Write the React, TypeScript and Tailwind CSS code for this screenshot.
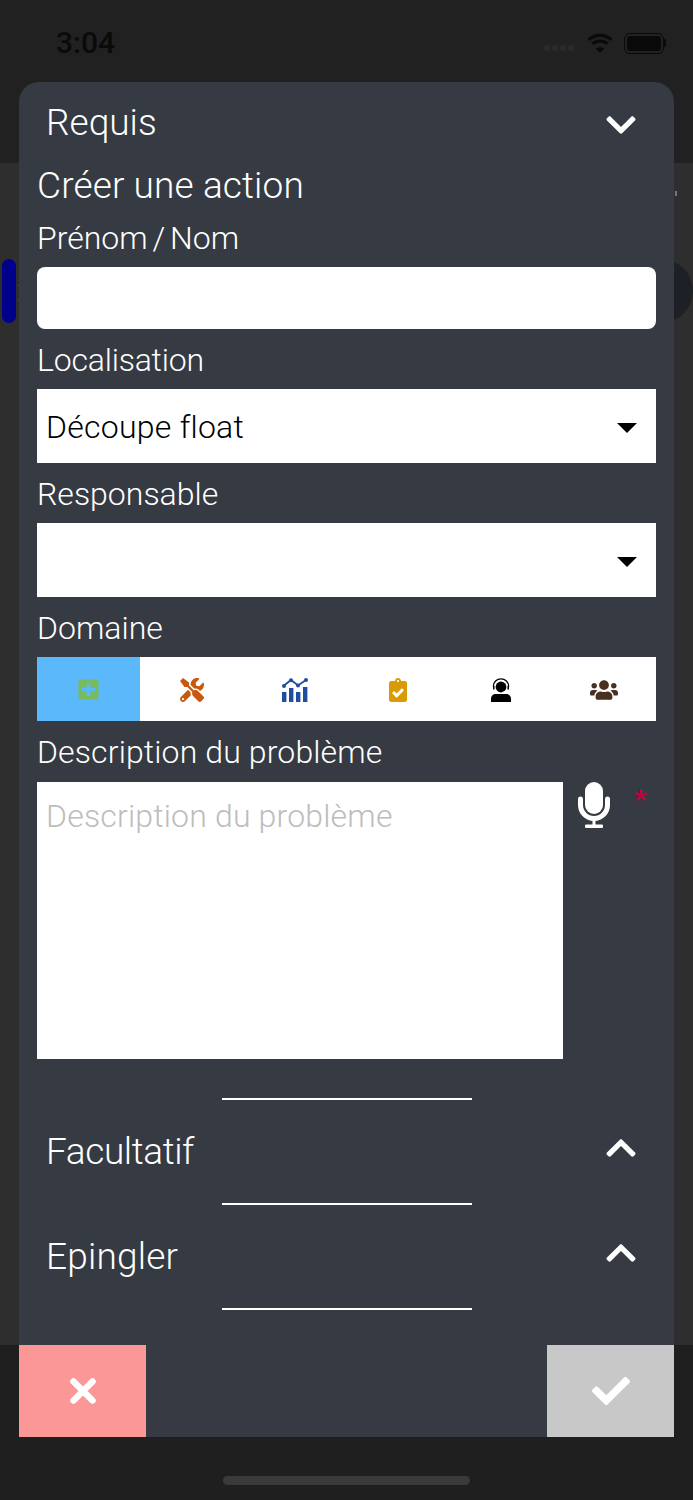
import { FaChevronDown, FaChevronUp, FaPlusSquare, FaTools, FaClipboardCheck, FaUsers, FaCheck } from "react-icons/fa";

const font = { fontFamily: "Roboto, 'Liberation Sans', sans-serif" };

function Label({ children, extra }: { children: string; extra?: string }) {
  return <div className={"mt-3 mb-[10px] flex h-[38px] items-center pl-[18px] text-[32px] font-light text-white " + (extra ?? "")}>{children}</div>;
}

function Select({ value }: { value?: string }) {
  return (
    <div className="mx-[18px] flex h-[74px] items-center justify-between bg-white pl-[9px] pr-[19px] text-[32px] font-[350] tracking-[0.25px] text-black">
      <span className="pt-[1px]">{value}</span>
      <span className="mt-[4px] h-0 w-0 border-x-[10px] border-t-[10px] border-x-transparent border-t-black" />
    </div>
  );
}

function Chart() {
  return (
    <svg width="26" height="24" viewBox="0 0 26 24" fill="#1f4ea1">
      <rect x="0" y="14" width="4.400" height="10" />
      <rect x="7" y="10" width="4.400" height="14" />
      <rect x="14" y="14" width="4.400" height="10" />
      <rect x="21" y="9" width="4.400" height="15" />
      <path d="M2 7.500 9 2l7 5.500L24 2" fill="none" stroke="#1f4ea1" strokeWidth="1.800" />
      <circle cx="2" cy="8" r="2" /><circle cx="9" cy="2.200" r="2" /><circle cx="16" cy="7.500" r="2" /><circle cx="24" cy="2" r="2" />
    </svg>
  );
}

function Agent() {
  return (
    <svg width="20" height="24" viewBox="0 0 20 24">
      <path d="M2.300 11.500a7.700 7.700 0 1 1 15.400 0" fill="none" stroke="#000" strokeWidth="1.300" transform="translate(0 -3)" />
      <path d="M2.800 8v3.600M17.200 8v3.600" stroke="#000" strokeWidth="1.500" />
      <circle cx="10" cy="9" r="5.400" fill="#000" />
      <path d="M15.500 11.500c-.6 2-2.300 2.800-4.300 2.800" fill="none" stroke="#fff" strokeWidth="1" />
      <path d="M0 24v-3.300C0 18 2.200 16 4.800 16h10.400c2.600 0 4.800 2 4.800 4.700V24z" fill="#000" />
    </svg>
  );
}

function Mic() {
  return (
    <svg width="32" height="46" viewBox="0 0 32 46" fill="#fff" className="ml-[15px]">
      <rect x="7" y="0" width="18" height="32" rx="9" />
      <path d="M2.500 17v6a13.500 13.500 0 0 0 27 0v-6" fill="none" stroke="#fff" strokeWidth="5" strokeLinecap="round" />
      <rect x="14.500" y="36" width="3" height="8" />
      <rect x="7" y="42.500" width="18" height="3.500" rx="1" />
    </svg>
  );
}

function Tab({ children, active }: { children: React.ReactNode; active?: boolean }) {
  return <div className={active ? "flex flex-1 items-center justify-center bg-[#5bb8fa] pt-[1px]" : "flex flex-1 items-center justify-center pt-[1px]"}>{children}</div>;
}

function Section({ title, extra }: { title: string; extra: string }) {
  return (
    <>
      <div className={"flex h-[103px] items-center justify-between pl-[27px] pr-[36px] text-[37px] font-light text-white " + extra}>
        <span>{title}</span>
        <FaChevronUp className="mb-[8px] text-[34px]" />
      </div>
      <div className="mx-auto h-[2px] w-[250px] bg-white" />
    </>
  );
}

export default function App() {
  return (
    <div style={font} className="relative flex h-[1500px] w-[693px] flex-col overflow-hidden bg-[#1f1f1f]">
      <div className="h-[163px] bg-[#212121] pl-[56px] pt-[25px]">
        <div className="flex items-center justify-between">
          <span className="text-[30px] font-medium leading-[36px] text-[#0a0a0a]">3:04</span>
          <div className="mr-[27px] flex items-center">
            <div className="mr-[2px] mt-[10px] flex gap-[2px]">
              <span className="h-[6px] w-[6px] rounded-full bg-[#2b2b2b]" />
              <span className="h-[6px] w-[6px] rounded-full bg-[#2b2b2b]" />
              <span className="h-[6px] w-[6px] rounded-full bg-[#2b2b2b]" />
              <span className="h-[6px] w-[6px] rounded-full bg-[#2b2b2b]" />
            </div>
            <svg width="28" height="22" viewBox="0 0 28 24" fill="none" stroke="#0a0a0a" strokeWidth="3.400" className="ml-[10px]">
              <path d="M1.500 8.500c7-6.500 18-6.500 25 0" />
              <path d="M6 13c4.500-4 11.500-4 16 0" />
              <path d="M14 23l-4.600-5c2.600-2 6.600-2 9.200 0z" fill="#0a0a0a" stroke="none" />
            </svg>
            <div className="ml-[10px] flex items-center">
              <div className="flex h-[21px] w-[40px] items-center rounded-[6px] border border-[#0a0a0a] p-[2px]">
                <div className="h-full w-full rounded-[3px] bg-[#0a0a0a]" />
              </div>
              <div className="h-[8px] w-[2px] rounded-r bg-[#0a0a0a]" />
            </div>
          </div>
        </div>
      </div>
      <div className="h-[1182px] bg-[#2e2e2e]" />
      <div className="flex flex-1 justify-center pt-[131px]">
        <div className="h-[9px] w-[247px] rounded-full bg-[#3a3a3a]" />
      </div>

      <div className="absolute left-[2px] top-[259px] h-[64px] w-[14px] rounded-[7px] bg-[#00008b]" />
      <div className="absolute left-[18px] top-[285px] h-[1px] w-[1px] bg-[#6b4a4a]" />
      <div className="absolute left-[18px] top-[299px] h-[1px] w-[1px] bg-[#6b4a4a]" />
      <div className="absolute right-0 top-[259px] h-[64px] w-[60px] rounded-r-[32px] bg-[#1d2125]" />
      <div className="absolute left-[675px] top-[191px] h-[5px] w-[2px] bg-[#777777]" />

      <div className="absolute left-[19px] top-[82px] flex h-[1355px] w-[655px] flex-col rounded-t-[20px] bg-[#363a42] text-white">
        <div className="flex h-[81px] items-center justify-between pl-[27px] pr-[36px] text-[37px] font-light">
          <span>Requis</span>
          <FaChevronDown className="mt-[4px] text-[34px]" />
        </div>
        <div className="flex h-[44px] items-center pl-[18px] pt-[1px] text-[37px] font-light tracking-[0.12px]">Créer une action</div>
        <Label extra="[word-spacing:-3px]">Prénom / Nom</Label>
        <div className="mx-[18px] h-[62px] rounded-[8px] bg-white" />
        <Label extra="tracking-[-0.2px]">Localisation</Label>
        <Select value="Découpe float" />
        <Label>Responsable</Label>
        <Select />
        <Label>Domaine</Label>
        <div className="mx-[18px] flex h-[64px] bg-white">
          <Tab active><FaPlusSquare className="text-[23px] text-[#78bb5f]" /></Tab>
          <Tab><FaTools className="text-[24px] text-[#c9580c]" /></Tab>
          <Tab><Chart /></Tab>
          <Tab><FaClipboardCheck className="text-[24px] text-[#d99a05]" /></Tab>
          <Tab><Agent /></Tab>
          <Tab><FaUsers className="text-[28px] text-[#4a2f22]" /></Tab>
        </div>
        <div className="mt-3 mb-[11px] flex h-[38px] items-center pl-[18px] text-[32px] font-light tracking-[0.13px]">Description du problème</div>
        <div className="flex items-start">
          <div className="ml-[18px] h-[277px] w-[526px] bg-white pl-[9px] pt-[15px] text-[32px] font-[350] leading-[38px] tracking-[0.18px] text-[#bdbdbd]">Description du problème</div>
          <Mic />
          <span className="ml-[24px] mt-[-1px] text-[28px] font-bold leading-[38px] text-[#c2003c]">*</span>
        </div>
        <div className="mx-auto mt-[39px] h-[2px] w-[250px] bg-white" />
        <Section title="Facultatif" extra="tracking-[-0.4px]" />
        <Section title="Epingler" extra="tracking-[0.2px]" />
        <div className="mt-auto flex h-[92px] justify-between">
          <div className="flex w-[127px] items-center justify-center bg-[#fc9797]">
            <svg width="26" height="26" viewBox="0 0 26 26" fill="none" stroke="#fff" strokeWidth="6.500" strokeLinecap="round"><path d="M3.500 3.500l19 19M22.500 3.500l-19 19" /></svg>
          </div>
          <div className="flex w-[127px] items-center justify-center bg-[#c8c8c8]">
            <FaCheck className="text-[38px] text-white" />
          </div>
        </div>
      </div>
    </div>
  );
}
